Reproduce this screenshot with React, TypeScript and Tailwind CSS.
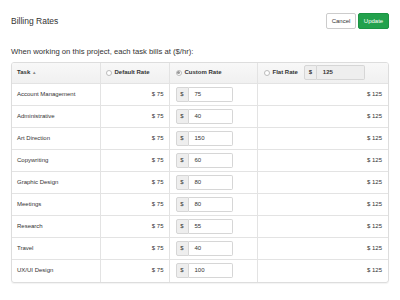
const tasks = [
  { name: "Account Management", custom: "75" },
  { name: "Administrative", custom: "40" },
  { name: "Art Direction", custom: "150" },
  { name: "Copywriting", custom: "60" },
  { name: "Graphic Design", custom: "80" },
  { name: "Meetings", custom: "80" },
  { name: "Research", custom: "55" },
  { name: "Travel", custom: "40" },
  { name: "UX/UI Design", custom: "100" },
]

function Radio({ checked = false }: { checked?: boolean }) {
  return (
    <span className="inline-flex h-[6px] w-[6px] shrink-0 items-center justify-center rounded-full border border-[#bbb] bg-white">
      {checked && <span className="h-[3px] w-[3px] rounded-full bg-[#999]" />}
    </span>
  )
}

function MoneyInput({ value, disabled = false, width }: { value: string; disabled?: boolean; width: string }) {
  return (
    <div className="flex h-[15px] items-stretch">
      <span className="flex w-[13px] items-center justify-center rounded-l-[2px] border border-[#d6d6d6] bg-[#eee] text-[6px]">
        $
      </span>
      <span
        className={`flex items-center rounded-r-[2px] border border-l-0 border-[#d6d6d6] pl-[6px] text-[6px] ${
          disabled ? "bg-[#eee]" : "bg-white"
        } ${width}`}
      >
        {value}
      </span>
    </div>
  )
}

export default function App() {
  return (
    <div className="h-[300px] w-[400px] bg-white px-[11px] text-[#333]" style={{ fontFamily: '"Liberation Sans", Arial, sans-serif' }}>
      <div className="flex items-center justify-between pt-[13px]">
        <h1 className="text-[8.5px] leading-none">Billing Rates</h1>
        <div className="flex gap-[2px]">
          <button className="h-[16px] w-[30px] rounded-[2px] border border-[#ccc] bg-white text-[6px] text-[#333]">
            Cancel
          </button>
          <button className="h-[16px] w-[31px] rounded-[2px] border border-[#1b9443] bg-[#22a14c] text-[6px] text-white">
            Update
          </button>
        </div>
      </div>

      <p className="mt-[19px] text-[7.7px] leading-none">When working on this project, each task bills at ($/hr):</p>

      <div className="mt-[6px] overflow-hidden rounded-[3px] border border-[#ddd] shadow-[0_1px_1px_rgba(0,0,0,0.05)]">
        <table className="w-full table-fixed border-collapse text-[6px]">
          <colgroup>
            <col className="w-[88px]" />
            <col className="w-[69px]" />
            <col className="w-[88px]" />
            <col />
          </colgroup>
          <thead>
            <tr className="h-[21px] bg-gradient-to-b from-[#f8f8f8] to-[#f0f0f0] font-bold">
              <th className="px-[5px] text-left">
                Task <span className="text-[4.5px] text-[#888]">▲</span>
              </th>
              <th className="border-l border-[#e3e3e3] px-[5px] text-left">
                <span className="flex items-center gap-[3px]">
                  <Radio /> Default Rate
                </span>
              </th>
              <th className="border-l border-[#e3e3e3] px-[6px] text-left">
                <span className="flex items-center gap-[3px]">
                  <Radio checked /> Custom Rate
                </span>
              </th>
              <th className="border-l border-[#e3e3e3] px-[6px] text-left">
                <span className="flex items-center gap-[3px]">
                  <Radio /> Flat Rate
                  <span className="ml-[3px]">
                    <MoneyInput value="125" disabled width="w-[48px]" />
                  </span>
                </span>
              </th>
            </tr>
          </thead>
          <tbody>
            {tasks.map((t) => (
              <tr key={t.name} className="h-[22px] border-t border-[#e3e3e3]">
                <td className="px-[5px]">{t.name}</td>
                <td className="border-l border-[#e3e3e3] px-[5px] text-right">$ 75</td>
                <td className="border-l border-[#e3e3e3] px-[6px]">
                  <MoneyInput value={t.custom} width="w-[44px]" />
                </td>
                <td className="border-l border-[#e3e3e3] px-[6px] text-right">$ 125</td>
              </tr>
            ))}
          </tbody>
        </table>
      </div>
    </div>
  )
}
